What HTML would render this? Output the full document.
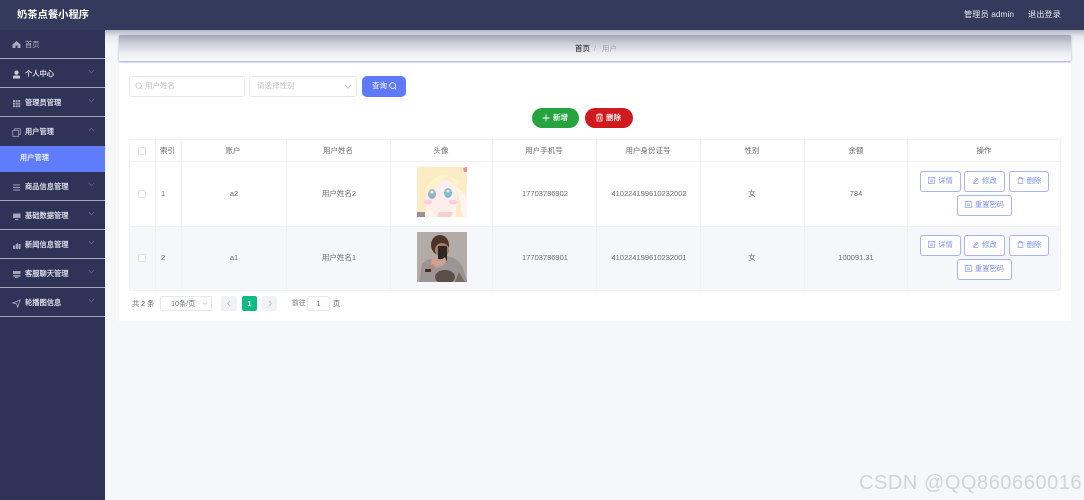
<!DOCTYPE html>
<html lang="zh"><head><meta charset="utf-8"><title>奶茶点餐小程序</title>
<style>
*{box-sizing:border-box;margin:0;padding:0}
html,body{width:1084px;height:500px;overflow:hidden;background:#f5f7fa}
body{position:relative;font-family:"Liberation Sans","Noto Sans CJK SC",sans-serif;font-size:7.5px;color:#6a6d73}
.a{position:absolute}
.t{position:absolute;white-space:nowrap;line-height:12px}
.c{text-align:center;transform:translateX(-50%)}
.mi{position:absolute;left:0;width:105px;height:29px;border-bottom:1px solid #a4a7b8;color:#e4e6ee}
.mi .tx{position:absolute;left:25px;top:9px;line-height:12px;font-size:7.25px;white-space:nowrap;-webkit-text-stroke:.2px #e4e6ee}
.mi svg.ic{position:absolute;left:12px;top:11px}
.mi svg.ch{position:absolute;left:88px;top:10px}
.vl{position:absolute;top:139px;height:151px;width:1px;background:#f0f2f6}
.hl{position:absolute;left:129px;width:931px;height:1px;background:#f0f2f6}
.btn{position:absolute;height:20.5px;border:1px solid #aab4f2;border-radius:3px;background:#fff;color:#7d8ff0;font-size:7.25px;line-height:18.5px;text-align:center;white-space:nowrap}
.btn svg{vertical-align:-1px;margin-right:3px}
.cb{position:absolute;left:138px;width:8px;height:8px;border:1px solid #e2e4ea;border-radius:1px;background:#fff}
</style></head><body>

<!-- top bar -->
<div class="a" style="left:0;top:0;width:1084px;height:30px;background:#333a5c"></div>
<div class="t" style="left:17px;top:9px;font-size:10.3px;font-weight:bold;color:#fff;line-height:14px">奶茶点餐小程序</div>
<div class="t" style="left:964px;top:9px;font-size:8.2px;color:#e8e9f0;letter-spacing:.1px">管理员 admin</div>
<div class="t" style="left:1028px;top:9px;font-size:8.2px;color:#e8e9f0">退出登录</div>

<!-- sidebar -->
<div class="a" style="left:0;top:30px;width:105px;height:470px;background:#2f3357"></div>
<div class="mi" style="top:30px"><svg class="ic" style="top:10px" width="9" height="9" viewBox="0 0 9 9"><path d="M4.5 1 L8.5 4.5 V8 H5.5 V5.5 H3.5 V8 H.5 V4.5Z" fill="#a9acbc"/></svg><span class="tx" style="-webkit-text-stroke:0;color:#b5b8c6">首页</span></div>
<div class="mi" style="top:58px;height:30px"><svg class="ic" style="top:12px" width="9" height="9" viewBox="0 0 9 9"><circle cx="4.5" cy="2.6" r="2.1" fill="#c9cbd6"/><path d="M1 8.5 V6.8 Q1 5.5 3 5.5 H6 Q8 5.5 8 6.8 V8.5Z" fill="#c9cbd6"/></svg><span class="tx" style="top:10px">个人中心</span><svg class="ch" style="top:11px" width="7" height="5" viewBox="0 0 7 5"><path d="M.8 1 L3.5 3.8 L6.2 1" fill="none" stroke="#5f6384" stroke-width=".8"/></svg></div>
<div class="mi" style="top:88px"><svg class="ic" width="9" height="9" viewBox="0 0 9 9"><path d="M1 1h2v2H1zM3.6 1h2v2h-2zM6.2 1h2v2h-2zM1 3.6h2v2H1zM3.6 3.6h2v2h-2zM6.2 3.6h2v2h-2zM1 6.2h2v2H1zM3.6 6.2h2v2h-2zM6.2 6.2h2v2h-2z" fill="#a3a6b8"/></svg><span class="tx">管理员管理</span><svg class="ch" width="7" height="5" viewBox="0 0 7 5"><path d="M.8 1 L3.5 3.8 L6.2 1" fill="none" stroke="#5f6384" stroke-width=".8"/></svg></div>
<div class="mi" style="top:117px;border:0"><svg class="ic" width="9" height="9" viewBox="0 0 9 9"><path d="M2.5 2.5V.8H8.3V6.5H6.5M.7 2.5H6.5V8.3H.7Z" fill="none" stroke="#9fa2b5" stroke-width=".8"/></svg><span class="tx">用户管理</span><svg class="ch" width="7" height="5" viewBox="0 0 7 5"><path d="M.8 4 L3.5 1.2 L6.2 4" fill="none" stroke="#5f6384" stroke-width=".8"/></svg></div>
<div class="a" style="left:0;top:146px;width:105px;height:26px;background:#5f7cfb"></div>
<div class="t" style="left:20px;top:152px;font-size:7.25px;color:#eef1ff;-webkit-text-stroke:.2px #eef1ff">用户管理</div>
<div class="mi" style="top:172px;height:29px"><svg class="ic" width="9" height="9" viewBox="0 0 9 9"><path d="M1 2h7M1 4.5h7M1 7h7" stroke="#a3a6b8" stroke-width="1"/></svg><span class="tx">商品信息管理</span><svg class="ch" width="7" height="5" viewBox="0 0 7 5"><path d="M.8 1 L3.5 3.8 L6.2 1" fill="none" stroke="#5f6384" stroke-width=".8"/></svg></div>
<div class="mi" style="top:201px"><svg class="ic" width="9" height="9" viewBox="0 0 9 9"><path d="M1 1.5h7.5v4.5H1zM3 7h3.5v1H3z" fill="#a3a6b8"/></svg><span class="tx">基础数据管理</span><svg class="ch" width="7" height="5" viewBox="0 0 7 5"><path d="M.8 1 L3.5 3.8 L6.2 1" fill="none" stroke="#5f6384" stroke-width=".8"/></svg></div>
<div class="mi" style="top:230px"><svg class="ic" width="9" height="9" viewBox="0 0 9 9"><path d="M1 8V4.5h2V8zM3.6 8V3.5L6 2v6zM6.5 8V3h2v5z" fill="#a3a6b8"/></svg><span class="tx">新闻信息管理</span><svg class="ch" width="7" height="5" viewBox="0 0 7 5"><path d="M.8 1 L3.5 3.8 L6.2 1" fill="none" stroke="#5f6384" stroke-width=".8"/></svg></div>
<div class="mi" style="top:259px"><svg class="ic" width="9" height="9" viewBox="0 0 9 9"><path d="M1 1h7.5v3H1zM1 5h7.5v1.5H1zM3 7h3.5v1H3z" fill="#a3a6b8"/></svg><span class="tx">客服聊天管理</span><svg class="ch" width="7" height="5" viewBox="0 0 7 5"><path d="M.8 1 L3.5 3.8 L6.2 1" fill="none" stroke="#5f6384" stroke-width=".8"/></svg></div>
<div class="mi" style="top:288px"><svg class="ic" width="9" height="9" viewBox="0 0 9 9"><path d="M.8 4 L8.2 1 L5.6 8.2 L4.6 4.8Z" fill="none" stroke="#a9acbc" stroke-width=".8"/></svg><span class="tx">轮播图信息</span><svg class="ch" width="7" height="5" viewBox="0 0 7 5"><path d="M.8 1 L3.5 3.8 L6.2 1" fill="none" stroke="#5f6384" stroke-width=".8"/></svg></div>

<!-- breadcrumb -->
<div class="a" style="left:105px;top:30px;width:979px;height:16px;background:linear-gradient(#b4b5c3,#e8e9ee 40%,#f5f7fa)"></div>
<div class="a" style="left:119px;top:35px;width:952px;height:27px;border-radius:2px;background:linear-gradient(#a4a5b6,#cfd0d9 35%,#ecedf1 70%,#fbfbfd);box-shadow:0 0 2px #a8b0e6;border-bottom:1px solid #b6bef0"></div>
<div class="t" style="left:575px;top:43px;color:#3a3b40;-webkit-text-stroke:.15px #3a3b40">首页</div>
<div class="t" style="left:594px;top:43px;color:#aaa">/</div>
<div class="t" style="left:602px;top:43px;color:#a5a6ad">用户</div>

<!-- card -->
<div class="a" style="left:119px;top:63px;width:952px;height:258px;background:#fff"></div>

<!-- search -->
<div class="a" style="left:129px;top:76px;width:116px;height:21px;border:1px solid #e6e8ee;border-radius:3px;background:#fff"></div>
<svg class="a" style="left:135px;top:82px" width="8" height="8" viewBox="0 0 8 8"><circle cx="3.6" cy="3.6" r="2.7" fill="none" stroke="#c0c4cc" stroke-width=".8"/><path d="M5.6 5.6L7.4 7.4" stroke="#c0c4cc" stroke-width=".8"/></svg>
<div class="t" style="left:145px;top:80px;color:#c0c3ca">用户姓名</div>
<div class="a" style="left:249px;top:76px;width:108px;height:21px;border:1px solid #e6e8ee;border-radius:3px;background:#fff"></div>
<div class="t" style="left:257px;top:80px;color:#c0c3ca">请选择性别</div>
<svg class="a" style="left:344px;top:84px" width="8" height="6" viewBox="0 0 8 6"><path d="M1 1.2L4 4.2L7 1.2" fill="none" stroke="#c0c4cc" stroke-width=".8"/></svg>
<div class="a" style="left:362px;top:76px;width:44px;height:21px;border-radius:5px;background:#6079f8"></div>
<div class="t" style="left:372px;top:80px;color:#fff">查询</div>
<svg class="a" style="left:389px;top:82px" width="8" height="8" viewBox="0 0 8 8"><circle cx="3.6" cy="3.6" r="2.9" fill="none" stroke="#fff" stroke-width=".8"/><path d="M5.7 5.7L7.3 7.3" stroke="#fff" stroke-width=".8"/></svg>

<!-- add / delete -->
<div class="a" style="left:532px;top:108px;width:47px;height:20px;border-radius:10px;background:#24a33e"></div>
<svg class="a" style="left:542px;top:114px" width="8" height="8" viewBox="0 0 8 8"><path d="M4 .5V7.5M.5 4H7.5" stroke="#fff" stroke-width=".9"/></svg>
<div class="t" style="left:553px;top:112px;color:#fff;-webkit-text-stroke:.15px #fff">新增</div>
<div class="a" style="left:585px;top:108px;width:48px;height:20px;border-radius:10px;background:#cf1a1e"></div>
<svg class="a" style="left:595px;top:113px" width="9" height="9" viewBox="0 0 9 9"><path d="M1 2H8M3 2V1H6V2M2 2V8H7V2M3.7 3.5V6.5M5.3 3.5V6.5" fill="none" stroke="#fff" stroke-width=".8"/></svg>
<div class="t" style="left:606px;top:112px;color:#fff;-webkit-text-stroke:.15px #fff">删除</div>

<!-- table -->
<div class="a" style="left:129px;top:226px;width:931px;height:64px;background:#f5f7fa"></div>
<div class="hl" style="top:139px"></div><div class="hl" style="top:161px"></div><div class="hl" style="top:226px"></div><div class="hl" style="top:290px"></div>
<div class="vl" style="left:129px"></div><div class="vl" style="left:155px"></div><div class="vl" style="left:181px"></div><div class="vl" style="left:286px"></div><div class="vl" style="left:390px"></div><div class="vl" style="left:492px"></div><div class="vl" style="left:596px"></div><div class="vl" style="left:700px"></div><div class="vl" style="left:804px"></div><div class="vl" style="left:907px"></div><div class="vl" style="left:1060px"></div>

<div class="cb" style="top:147px"></div>
<div class="t" style="left:160px;top:145px">索引</div>
<div class="t c" style="left:233px;top:145px">账户</div>
<div class="t c" style="left:338px;top:145px">用户姓名</div>
<div class="t c" style="left:441px;top:145px">头像</div>
<div class="t c" style="left:544px;top:145px">用户手机号</div>
<div class="t c" style="left:648px;top:145px">用户身份证号</div>
<div class="t c" style="left:752px;top:145px">性别</div>
<div class="t c" style="left:856px;top:145px">余额</div>
<div class="t c" style="left:984px;top:145px">操作</div>

<div class="cb" style="top:190px"></div>
<div class="t" style="left:161px;top:188px">1</div>
<div class="t c" style="left:234px;top:188px">a2</div>
<div class="t c" style="left:339px;top:188px">用户姓名2</div>
<div class="t c" style="left:545px;top:188px">17703786902</div>
<div class="t c" style="left:649px;top:188px">410224199610232002</div>
<div class="t c" style="left:752px;top:188px">女</div>
<div class="t c" style="left:856px;top:188px">784</div>

<div class="cb" style="top:254px"></div>
<div class="t" style="left:161px;top:252px">2</div>
<div class="t c" style="left:234px;top:252px">a1</div>
<div class="t c" style="left:339px;top:252px">用户姓名1</div>
<div class="t c" style="left:545px;top:252px">17703786901</div>
<div class="t c" style="left:649px;top:252px">410224199610232001</div>
<div class="t c" style="left:752px;top:252px">女</div>
<div class="t c" style="left:856px;top:252px">100091.31</div>

<!-- avatar 1 -->
<svg class="a" style="left:417px;top:167px" width="50" height="50" viewBox="0 0 50 50">
<rect width="50" height="50" fill="#fdf4ea"/>
<path d="M0 0H50V14L47 50H39L40 20Q26 6 12 18L8 50H0Z" fill="#fcecc4"/>
<path d="M40 20L46 50H50V30Z" fill="#fdf6f0"/>
<path d="M9 22Q25 4 40 22V38Q30 50 25 50Q18 50 9 38Z" fill="#fdeeee"/>
<path d="M8 26Q14 6 32 8Q22 12 13 30Z" fill="#fdf2cc"/>
<path d="M38 26Q38 12 28 8L42 14Z" fill="#fdf2cc"/>
<ellipse cx="15" cy="27" rx="4" ry="5" fill="#8fb6cc"/><ellipse cx="31" cy="26" rx="4" ry="5" fill="#82bcc8"/>
<circle cx="15" cy="25" r="1.5" fill="#fff"/><circle cx="31" cy="24" r="1.5" fill="#fff"/>
<ellipse cx="11" cy="35" rx="4" ry="2.5" fill="#fbcfd8"/><ellipse cx="36" cy="35" rx="4" ry="2.5" fill="#fbcfd8"/>
<path d="M22 45H36L34 50H20Z" fill="#f9d0cc"/>
<rect x="0" y="45" width="8" height="5" fill="#9a9096"/>
<path d="M46 1L50 0V5L47 5Z" fill="#ea909a"/>
</svg>
<!-- avatar 2 -->
<svg class="a" style="left:417px;top:232px" width="50" height="50" viewBox="0 0 50 50">
<rect width="50" height="50" fill="#b3aba7"/>
<path d="M2 50L5 32Q10 26 18 27L30 24Q42 26 46 36L50 50Z" fill="#9b9598"/>
<ellipse cx="23" cy="13" rx="9" ry="10" fill="#4c3427"/>
<ellipse cx="25" cy="18" rx="7" ry="7" fill="#a67c66"/>
<rect x="21" y="14" width="9" height="17" rx="1" fill="#2e2622"/>
<path d="M15 24Q24 30 28 25L30 30Q22 38 14 34Z" fill="#c9a292"/>
<path d="M9 36L16 32L18 36L10 42Z" fill="#b4897a"/>
<rect x="8" y="37" width="6" height="3" fill="#3b3230"/>
<ellipse cx="28" cy="45" rx="10" ry="7" fill="#5a4e48"/>
<path d="M42 40L48 50H38Z" fill="#7a6c60"/>
</svg>

<!-- action buttons row 1 -->
<div class="btn" style="left:920px;top:171px;width:41px"><svg width="7" height="7" viewBox="0 0 7 7"><path d="M.5.5h6v6h-6zM2 3h3M2 4.6h3" fill="none" stroke="#8f9ff0" stroke-width=".7"/></svg>详情</div>
<div class="btn" style="left:964px;top:171px;width:41px"><svg width="7" height="7" viewBox="0 0 7 7"><path d="M1 6.5H6M1.5 5L5 1.2L6 2.2L2.6 5.5H1.5Z" fill="none" stroke="#8f9ff0" stroke-width=".7"/></svg>修改</div>
<div class="btn" style="left:1009px;top:171px;width:40px"><svg width="7" height="7" viewBox="0 0 7 7"><path d="M.5 1.5h6M2.5 1.5V.5h2v1M1.2 1.5V6.5H5.8V1.5" fill="none" stroke="#8f9ff0" stroke-width=".7"/></svg>删除</div>
<div class="btn" style="left:957px;top:195px;width:55px"><svg width="7" height="7" viewBox="0 0 7 7"><path d="M.5.5h6v6h-6zM2 3h3M2 4.6h3" fill="none" stroke="#8f9ff0" stroke-width=".7"/></svg>重置密码</div>
<!-- action buttons row 2 -->
<div class="btn" style="left:920px;top:235px;width:41px"><svg width="7" height="7" viewBox="0 0 7 7"><path d="M.5.5h6v6h-6zM2 3h3M2 4.6h3" fill="none" stroke="#8f9ff0" stroke-width=".7"/></svg>详情</div>
<div class="btn" style="left:964px;top:235px;width:41px"><svg width="7" height="7" viewBox="0 0 7 7"><path d="M1 6.5H6M1.5 5L5 1.2L6 2.2L2.6 5.5H1.5Z" fill="none" stroke="#8f9ff0" stroke-width=".7"/></svg>修改</div>
<div class="btn" style="left:1009px;top:235px;width:40px"><svg width="7" height="7" viewBox="0 0 7 7"><path d="M.5 1.5h6M2.5 1.5V.5h2v1M1.2 1.5V6.5H5.8V1.5" fill="none" stroke="#8f9ff0" stroke-width=".7"/></svg>删除</div>
<div class="btn" style="left:957px;top:259px;width:55px"><svg width="7" height="7" viewBox="0 0 7 7"><path d="M.5.5h6v6h-6zM2 3h3M2 4.6h3" fill="none" stroke="#8f9ff0" stroke-width=".7"/></svg>重置密码</div>

<!-- pagination -->
<div class="t" style="left:132px;top:298px;font-size:7.2px">共 2 条</div>
<div class="a" style="left:160px;top:296px;width:52px;height:15px;border:1px solid #e6e8ee;border-radius:2px;background:#fff"></div>
<div class="t" style="left:171px;top:298px;font-size:7.2px">10条/页</div>
<svg class="a" style="left:202px;top:301px" width="6" height="5" viewBox="0 0 6 5"><path d="M1 1.2L3 3.4L5 1.2" fill="none" stroke="#c0c4cc" stroke-width=".7"/></svg>
<div class="a" style="left:221px;top:296px;width:16px;height:15px;border-radius:2px;background:#f0f2f5"></div>
<svg class="a" style="left:226px;top:300px" width="6" height="7" viewBox="0 0 6 7"><path d="M4 1L1.6 3.5L4 6" fill="none" stroke="#b4b7be" stroke-width=".8"/></svg>
<div class="a" style="left:242px;top:296px;width:15px;height:15px;border-radius:2px;background:#0fbb85;color:#fff;text-align:center;line-height:15px;font-weight:bold">1</div>
<div class="a" style="left:262px;top:296px;width:15px;height:15px;border-radius:2px;background:#f0f2f5"></div>
<svg class="a" style="left:267px;top:300px" width="6" height="7" viewBox="0 0 6 7"><path d="M2 1L4.4 3.5L2 6" fill="none" stroke="#b4b7be" stroke-width=".8"/></svg>
<div class="t" style="left:292px;top:298px;font-size:6.8px">前往</div>
<div class="a" style="left:307px;top:296px;width:23px;height:15px;border:1px solid #e6e8ee;border-radius:2px;background:#fff;text-align:center;line-height:13px">1</div>
<div class="t" style="left:333px;top:298px;font-size:7.2px">页</div>

<!-- watermark -->
<div class="t" style="left:859px;top:472px;font-size:20px;line-height:23px;color:#d2d4d8;letter-spacing:.55px">CSDN @QQ860660016</div>
</body></html>
